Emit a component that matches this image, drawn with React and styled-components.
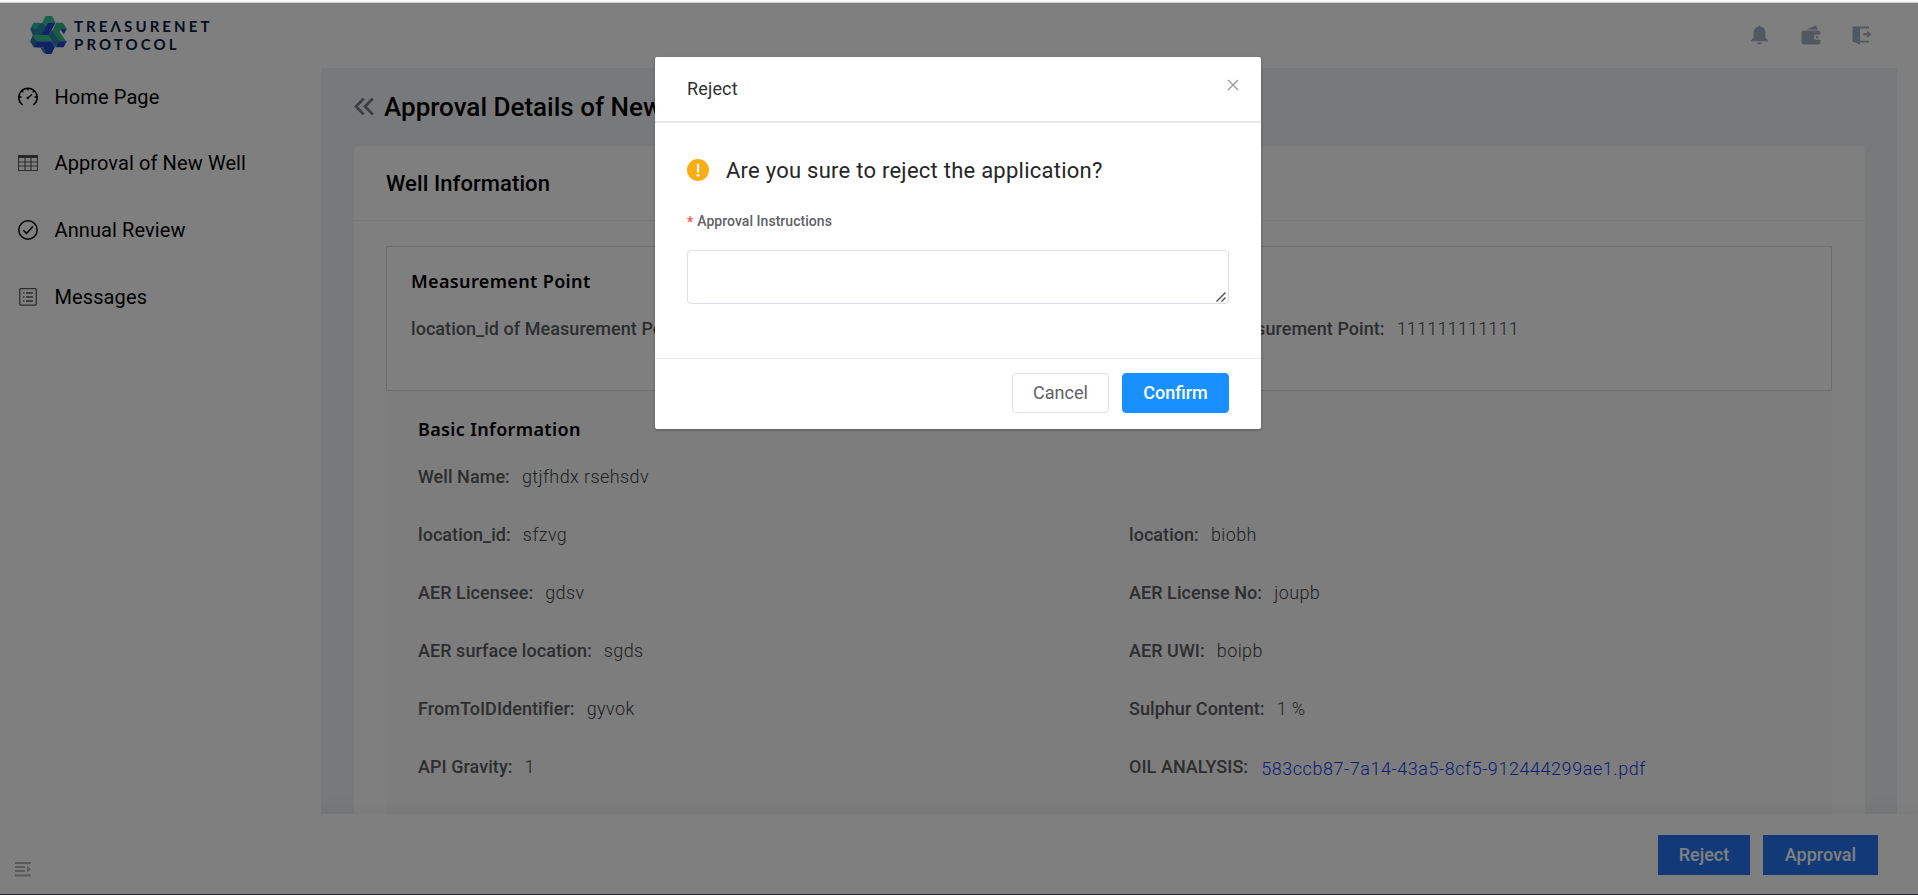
import React from "react";
import styled, { createGlobalStyle } from "styled-components";

const Global = createGlobalStyle`
  * { box-sizing: border-box; }
  body { margin: 0; font-family: Roboto, "Liberation Sans", sans-serif; background: #fff; overflow: hidden; }
`;

const Frame = styled.div`
  position: relative;
  height: 895px;
  display: flex;
  flex-direction: column;
  border-top: 3px solid #f8f9fa;
  border-bottom: 1px solid #262433;
  background: #fff;
  &::before {
    content: "";
    position: absolute;
    top: -1px;
    left: 0;
    right: 0;
    height: 1px;
    background: #cfcfcf;
  }
`;

const Header = styled.header`
  height: 65px;
  flex: none;
  display: flex;
  align-items: center;
  justify-content: space-between;
  padding: 0 46px 0 30px;
`;

const Brand = styled.div`
  display: flex;
  align-items: center;
  gap: 7px;
  margin-bottom: 1px;
`;

const BrandName = styled.div`
  font-family: Lato, sans-serif;
  font-weight: 700;
  font-size: 15px;
  line-height: 18px;
  letter-spacing: 3.1px;
  color: #0a1a44;
`;

const HeaderIcons = styled.div`
  display: flex;
  gap: 31.5px;
  margin-bottom: 2px;
  color: #a6b0c0;
`;

const Columns = styled.div`
  display: flex;
  height: 746px;
  flex: none;
`;

const Sidebar = styled.nav`
  width: 321px;
  flex: none;
  position: relative;
  z-index: 1;
  background: #fff;
`;

const NavItem = styled.div`
  display: flex;
  align-items: center;
  gap: 16.5px;
  height: 66.6px;
  padding-left: 18px;
  font-size: 20px;
  letter-spacing: 0.1px;
  color: #000;
  &:first-child { margin-top: -4.5px; }
  svg { flex: none; }
`;

const Main = styled.main`
  width: 1576px;
  padding: 0 32px 0 33px;
  background: #f0f2f5;
  overflow: hidden;
`;

const PageTitle = styled.h1`
  display: flex;
  align-items: center;
  gap: 10px;
  height: 78px;
  margin: 0;
  padding-bottom: 1px;
  font-size: 26px;
  font-weight: 500;
  white-space: nowrap;
  color: #000;
`;

const Card = styled.section`
  height: 700px;
  background: #fff;
  border-radius: 5px;
`;

const CardHead = styled.h2`
  height: 75px;
  margin: 0;
  padding: 0 32px;
  border-bottom: 1px solid #ececec;
  font-size: 22px;
  line-height: 75px;
  font-weight: 500;
  letter-spacing: 0.08px;
  color: #000;
`;

const CardBody = styled.div`
  padding: 25px 33px 0 32px;
`;

const PointBox = styled.div`
  height: 145px;
  padding: 0 24px;
  border: 1px solid #dcdcdc;
`;

const BasicBox = styled.div`
  padding: 0 32px;
  height: 480px;
  background: #fafafa;
`;

const GroupTitle = styled.h3`
  margin: 0;
  height: ${(p) => p.$height}px;
  padding-top: ${(p) => p.$top}px;
  font-family: "Noto Sans", sans-serif;
  font-size: 18px;
  line-height: 26px;
  font-weight: 600;
  letter-spacing: 0.36px;
  color: #000;
`;

const FieldGrid = styled.div`
  display: grid;
  grid-template-columns: ${(p) => p.$first || 711}px 1fr;
  grid-auto-rows: 58px;
`;

const Field = styled.div`
  display: flex;
  align-items: center;
  gap: 12px;
  ${(p) => p.$wide && "grid-column: 1 / -1;"}
`;

const Label = styled.span`
  font-size: 18px;
  font-weight: 500;
  letter-spacing: 0.05px;
  color: #5a5c60;
  white-space: nowrap;
`;

const Value = styled.span`
  font-size: 18px;
  font-weight: 300;
  letter-spacing: ${(p) => (p.$digits ? 0.2 : 0.4)}px;
  color: #404246;
  white-space: nowrap;
`;

const FileLink = styled(Value)`
  padding: 4px 0 0 1px;
  letter-spacing: 0.55px;
  color: #1c38e8;
`;

const Footer = styled.footer`
  flex: 1;
  position: relative;
  display: flex;
  align-items: center;
  justify-content: space-between;
  padding: 2px 40px 0 15px;
  background: #fff;
  box-shadow: 0 -2px 18px rgba(0, 0, 0, 0.06);
`;

const CollapseButton = styled.span`
  display: flex;
  margin-top: 28px;
`;

const Actions = styled.div`
  display: flex;
  gap: 13px;
`;

const Button = styled.button`
  height: 40px;
  width: ${(p) => p.$width}px;
  padding: 0 0 2px;
  border: 1px solid ${(p) => p.$border};
  border-radius: ${(p) => p.$radius || 0}px;
  background: ${(p) => p.$bg};
  color: ${(p) => p.$color || "#fff"};
  font-family: inherit;
  font-size: 18px;
  font-weight: ${(p) => p.$weight || 500};
`;

const Backdrop = styled.div`
  position: absolute;
  inset: 0;
  z-index: 2;
  background: rgba(0, 0, 0, 0.5);
  display: flex;
  justify-content: center;
  align-items: flex-start;
  padding-top: 54px;
`;

const Dialog = styled.div`
  width: 606px;
  height: 372px;
  margin-right: 2px;
  display: flex;
  flex-direction: column;
  background: #fff;
  border-radius: 2px;
  box-shadow: 0 1px 3px rgba(0, 0, 0, 0.3);
`;

const DialogHead = styled.div`
  height: 66px;
  flex: none;
  display: flex;
  align-items: center;
  justify-content: space-between;
  padding: 0 22px 2px 32px;
  border-bottom: 2px solid #e8e8e8;
  font-size: 18px;
  letter-spacing: 0.15px;
  color: #303133;
  svg { margin-top: -7px; }
`;

const DialogBody = styled.div`
  flex: 1;
  padding: 31px 32px 0;
`;

const Question = styled.div`
  display: flex;
  align-items: center;
  gap: 17px;
  height: 32px;
  font-size: 22px;
  letter-spacing: 0.25px;
  color: #262626;
`;

const InputLabel = styled.label`
  display: flex;
  gap: 4px;
  margin: 25px 0 19px;
  font-size: 14px;
  line-height: 20px;
  font-weight: 500;
  letter-spacing: 0.04px;
  color: #606266;
`;

const Required = styled.span`
  height: 20px;
  line-height: 22px;
  color: #ff4d4f;
`;

const TextAreaWrap = styled.div`
  position: relative;
  svg { position: absolute; right: 3px; bottom: 2px; }
`;

const TextArea = styled.textarea`
  display: block;
  width: 542px;
  height: 54px;
  border: 1px solid #dcdfe6;
  border-radius: 4px;
  resize: none;
`;

const DialogFoot = styled.div`
  height: 71px;
  flex: none;
  display: flex;
  justify-content: flex-end;
  gap: 13px;
  padding: 14px 32px 0;
  border-top: 1px solid #e8e8e8;
`;

function Logo() {
  return (
    <svg width="37" height="38" viewBox="0 0 110 114">
      <path d="M0 38L8 28L36 20L56 20L36 58H8Z" fill="#2b84a8" />
      <path d="M4 30L10 20H30L22 36L14 42Z" fill="#2cbf94" />
      <path d="M36 22L46 0H66L76 20H54L46 34Z" fill="#30c08e" />
      <path d="M54 20H76L56 57H34Z" fill="#2346c8" />
      <path d="M78 20H98L110 38H92L88 48L108 76H84L66 44Z" fill="#30b888" />
      <path d="M90 38H110L101 55Z" fill="#2346c8" />
      <path d="M8 57H54L64 76H18Z" fill="#30c890" />
      <path d="M66 42L87 76L75 94L54 57Z" fill="#2b84a8" />
      <path d="M0 76L8 57L19 76L10 94Z" fill="#2b78a8" />
      <path d="M18 76H64L74 93L64 114H46L40 94H10Z" fill="#2346c8" />
      <path d="M10 94H40L46 114L38 108L32 96Z" fill="#2b78a8" />
      <path d="M86 76H110L100 94H76Z" fill="#2346c8" />
    </svg>
  );
}

const BellIcon = () => (
  <svg width="19" height="20" viewBox="0 0 19 20" fill="currentColor">
    <path d="M8.500 1.500a1 1 0 0 1 2 0c3 .6 5 3 5 6v5.200l2.400 2.600v.9H1.100v-.9l2.400-2.600V7.500c0-3 2-5.400 5-6ZM6.700 17.500h5.600c-.4 1.300-1.500 2-2.800 2s-2.400-.7-2.800-2Z" />
  </svg>
);

const WalletIcon = () => (
  <svg width="20" height="20" viewBox="0 0 20 20" fill="currentColor">
    <path d="M5.500 4.500 13.800.7c.6-.3 1.200 0 1.500.5l1.700 3.300Z" />
    <path d="M3 5.500h14c1.500 0 2.500 1 2.500 2.500v1.500h-4a2.600 2.600 0 0 0 0 5.300h4v2c0 1.500-1 2.700-2.500 2.700H3C1.500 19.500.5 18.300.5 16.800V8C.5 6.500 1.500 5.500 3 5.500Z" />
    <circle cx="16" cy="12.100" r="1.300" />
  </svg>
);

const ExitIcon = () => (
  <svg width="20" height="20" viewBox="0 0 20 20" fill="currentColor">
    <path d="M.5 1.500H17v2H8V15.800h9v1.700H8V19.500L.5 16.500Z" />
    <path d="M11.500 8h3.700V5.800l4.500 3.500-4.500 3.500v-2.300h-3.700Z" />
  </svg>
);

const GaugeIcon = () => (
  <svg width="20" height="20" viewBox="0 0 20 20" fill="none" stroke="#000" strokeWidth="1.500">
    <path d="M4.600 17.800A9.200 9.200 0 1 1 15.400 17.800" />
    <path d="M10 1v2.500M3.600 3.600l1.700 1.700M16.400 3.600l-1.700 1.700M1 10h2.500M19 10h-2.500M10 11l4-3.800" strokeWidth="1.300" />
    <circle cx="9.800" cy="11" r="1.300" fill="#000" stroke="none" />
  </svg>
);

const CheckIcon = () => (
  <svg width="20" height="20" viewBox="0 0 20 20" fill="none" stroke="#000" strokeWidth="1.500">
    <circle cx="10" cy="10" r="9.200" />
    <path d="M5.300 10.200l3.200 3.200 6.300-7" />
  </svg>
);

const TableIcon = () => (
  <svg width="20" height="16" viewBox="0 0 20 16" fill="none" stroke="#5c5c5c" strokeWidth="1.200">
    <path d="M.5.500h19v15H.5ZM.5 7h19M.5 11h19M7 3v12.500M13 3v12.500" />
    <path d="M0 1.500h20" strokeWidth="3" stroke="#505050" />
  </svg>
);

const ListIcon = () => (
  <svg width="20" height="18" viewBox="0 0 20 18" fill="none" stroke="#585858" strokeWidth="1.300">
    <rect x="1.800" y=".7" width="16.500" height="16.500" rx="1" />
    <path d="M5 5h1.500M8 5h7M5 9h1.500M8 9h7M5 13h1.500M8 13h7" />
  </svg>
);

const CollapseIcon = () => (
  <svg width="16" height="15" viewBox="0 0 16 15" fill="#b4b4b4">
    <path d="M0 0h16v2H0ZM0 4h10v2H0ZM0 8h10v2H0ZM0 12.500h16v2H0ZM12 4l4 3.200-4 3.300Z" />
  </svg>
);

const BackIcon = () => (
  <svg width="20" height="19" viewBox="0 0 20 19" fill="none" stroke="#767e8a" strokeWidth="2.800">
    <path d="M9.800 1.500L2 9.500L9.800 17.500M18.800 1.500L11 9.500L18.800 17.500" />
  </svg>
);

const WarningIcon = () => (
  <svg width="22" height="22" viewBox="0 0 22 22">
    <circle cx="11" cy="11" r="11" fill="#faad14" />
    <rect x="9.900" y="4.800" width="2.200" height="8.700" rx=".8" fill="#fff" />
    <circle cx="11" cy="16.300" r="1.400" fill="#fff" />
  </svg>
);

const CloseIcon = () => (
  <svg width="12" height="12" viewBox="0 0 12 12" stroke="#909399" strokeWidth="1.100">
    <path d="M1 1l10 10M11 1L1 11" />
  </svg>
);

const ResizeGrip = () => (
  <svg width="10" height="10" viewBox="0 0 10 10" stroke="#444" strokeWidth="1.300">
    <path d="M.5 9.500L9.500.5M5.500 9.500L9.500 5.500" />
  </svg>
);

const FIELDS = [
  ["Well Name:", "gtjfhdx rsehsdv", "wide"],
  ["location_id:", "sfzvg"],
  ["location:", "biobh"],
  ["AER Licensee:", "gdsv"],
  ["AER License No:", "joupb"],
  ["AER surface location:", "sgds"],
  ["AER UWI:", "boipb"],
  ["FromToIDIdentifier:", "gyvok"],
  ["Sulphur Content:", "1 %"],
  ["API Gravity:", "1"],
  ["OIL ANALYSIS:", "583ccb87-7a14-43a5-8cf5-912444299ae1.pdf", "file"],
];

export default function App() {
  return (
    <Frame>
      <Global />
      <Header>
        <Brand>
          <Logo />
          <BrandName>TREΛSURENET<br />PROTOCOL</BrandName>
        </Brand>
        <HeaderIcons><BellIcon /><WalletIcon /><ExitIcon /></HeaderIcons>
      </Header>
      <Columns>
        <Sidebar>
          <NavItem><GaugeIcon />Home Page</NavItem>
          <NavItem><TableIcon />Approval of New Well</NavItem>
          <NavItem><CheckIcon />Annual Review</NavItem>
          <NavItem><ListIcon />Messages</NavItem>
        </Sidebar>
        <Main>
          <PageTitle><BackIcon />Approval Details of New Well</PageTitle>
          <Card>
            <CardHead>Well Information</CardHead>
            <CardBody>
              <PointBox>
                <GroupTitle $height={52} $top={21}>Measurement Point</GroupTitle>
                <FieldGrid $first={719}>
                  <Field><Label>location_id of Measurement Point:</Label></Field>
                  <Field><Label>location of Measurement Point:</Label><Value $digits>111111111111</Value></Field>
                </FieldGrid>
              </PointBox>
              <BasicBox>
                <GroupTitle $height={56} $top={25}>Basic Information</GroupTitle>
                <FieldGrid>
                  {FIELDS.map(([label, value, kind]) => (
                    <Field key={label} $wide={kind === "wide"}>
                      <Label>{label}</Label>
                      {kind === "file" ? <FileLink>{value}</FileLink> : <Value>{value}</Value>}
                    </Field>
                  ))}
                </FieldGrid>
              </BasicBox>
            </CardBody>
          </Card>
        </Main>
      </Columns>
      <Footer>
        <CollapseButton><CollapseIcon /></CollapseButton>
        <Actions>
          <Button $width={92} $bg="#2474f0" $border="#2474f0">Reject</Button>
          <Button $width={115} $bg="#2474f0" $border="#2474f0">Approval</Button>
        </Actions>
      </Footer>
      <Backdrop>
        <Dialog>
          <DialogHead>Reject<CloseIcon /></DialogHead>
          <DialogBody>
            <Question><WarningIcon />Are you sure to reject the application?</Question>
            <InputLabel><Required>*</Required>Approval Instructions</InputLabel>
            <TextAreaWrap><TextArea /><ResizeGrip /></TextAreaWrap>
          </DialogBody>
          <DialogFoot>
            <Button $width={97} $bg="#fff" $border="#dcdfe6" $color="#606266" $weight={400} $radius={4}>Cancel</Button>
            <Button $width={107} $bg="#1890ff" $border="#1890ff" $radius={4}>Confirm</Button>
          </DialogFoot>
        </Dialog>
      </Backdrop>
    </Frame>
  );
}
